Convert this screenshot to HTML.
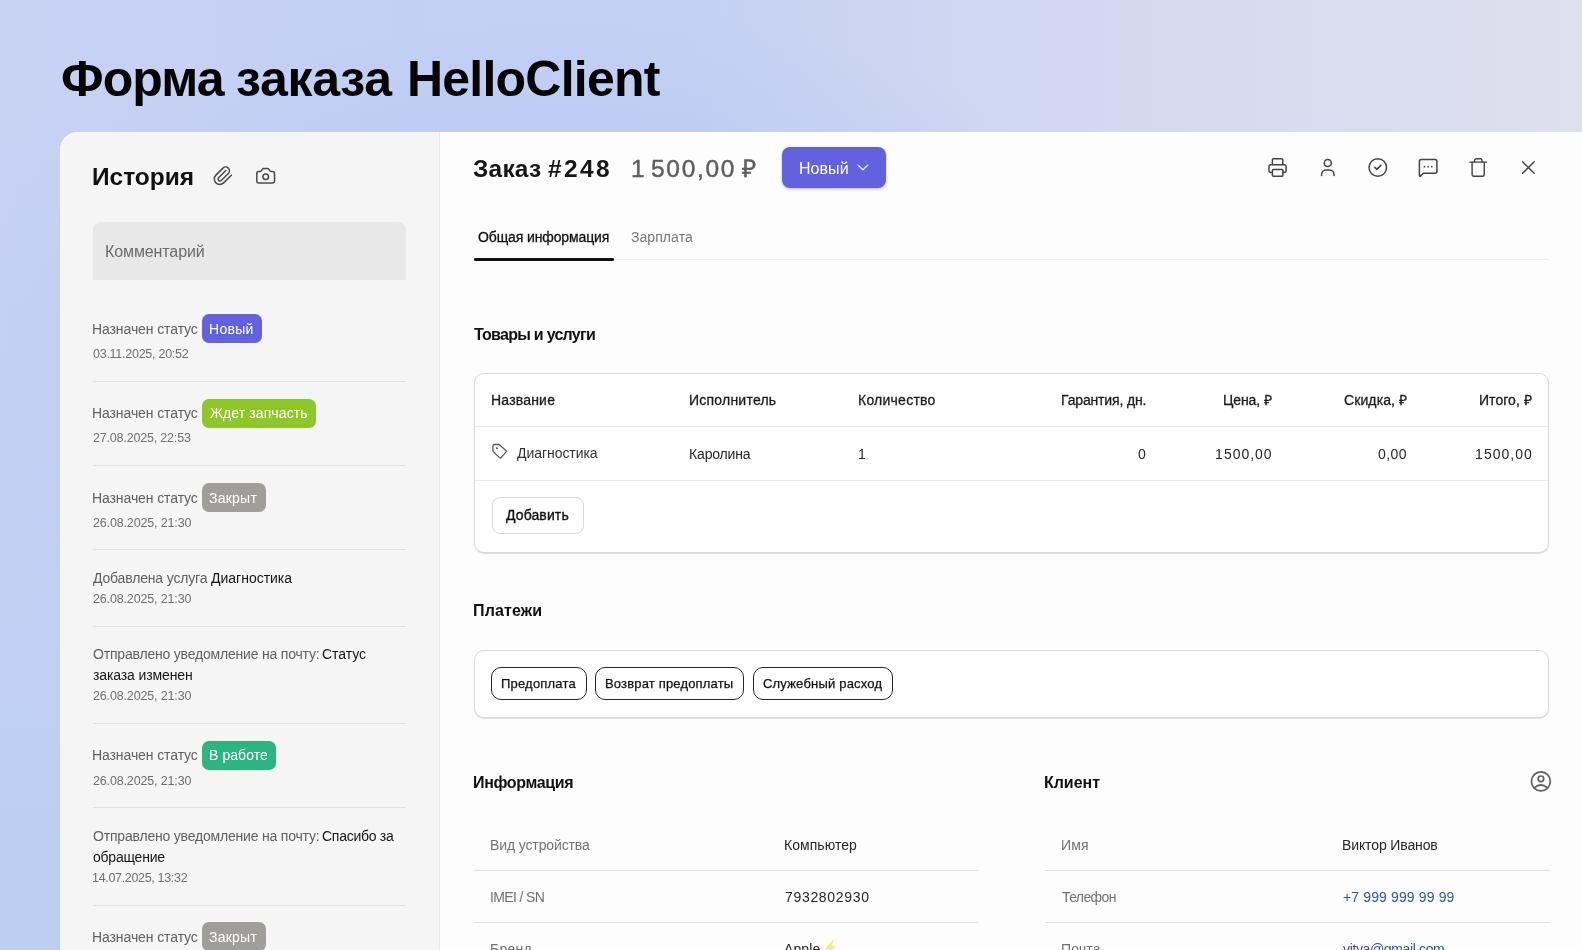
<!DOCTYPE html>
<html lang="ru">
<head>
<meta charset="utf-8">
<title>Форма заказа HelloClient</title>
<style>
*{box-sizing:border-box;margin:0;padding:0}
html,body{width:1582px;height:950px;overflow:hidden}
body{position:relative;font-family:"Liberation Sans",sans-serif;color:#111;background:#c6d0f3}
#bg{position:absolute;left:0;top:0;width:1582px;height:950px;background:linear-gradient(to bottom,rgba(189,206,243,0) 0px,rgba(189,206,243,0) 90px,rgba(189,206,243,1) 900px) 0 0/64px 950px no-repeat,radial-gradient(ellipse 620px 380px at 560px 380px,rgba(180,196,244,1) 0%,rgba(180,196,244,0) 100%),linear-gradient(to right,#c8d2f3 0px,#c4d0f3 400px,#c5d1f3 700px,#d0d7f1 1000px,#d9dcef 1300px,#dee0ee 1582px)}
.t{will-change:transform;position:absolute;white-space:pre;line-height:40px;height:40px}
.abs{position:absolute}
#card{position:absolute;left:60px;top:132px;width:1540px;height:840px;background:#fdfdfd;border-radius:18px 0 0 0}
#side{position:absolute;left:60px;top:132px;width:380px;height:840px;background:#f5f5f5;border-right:1px solid #e8e8e8;border-radius:18px 0 0 0}
.badge{position:absolute;height:29px;border-radius:7px}
.hr{position:absolute;height:1px;background:#e2e2e2}
.box{position:absolute;border:1px solid #dadada;border-radius:10px;background:#fff;box-shadow:0 1px 0 rgba(0,0,0,0.09),0 1px 3px rgba(0,0,0,0.04)}
.pill{position:absolute;height:32.5px;border:1.4px solid #262626;border-radius:10px}
svg{position:absolute;overflow:visible}
</style>
</head>
<body>
<div id="bg"></div>
<div id="card"></div>
<div id="side"></div>

<!-- sidebar -->
<div class="abs" style="left:93px;top:222px;width:313px;height:58px;background:#e8e8e8;border-radius:8px 8px 0 0"></div>
<div class="badge" style="left:201.5px;top:314px;width:60px;background:#6361de"></div>
<div class="hr" style="left:93px;top:381px;width:313px"></div>
<div class="badge" style="left:201.5px;top:399px;width:114.5px;background:#8cc828"></div>
<div class="hr" style="left:93px;top:465px;width:313px"></div>
<div class="badge" style="left:201.5px;top:483px;width:64.5px;background:#a09e9a"></div>
<div class="hr" style="left:93px;top:549px;width:313px"></div>
<div class="hr" style="left:93px;top:626px;width:313px"></div>
<div class="hr" style="left:93px;top:723px;width:313px"></div>
<div class="badge" style="left:201.5px;top:741px;width:74.5px;background:#2cb583"></div>
<div class="hr" style="left:93px;top:807px;width:313px"></div>
<div class="hr" style="left:93px;top:905px;width:313px"></div>
<div class="badge" style="left:201.5px;top:922px;width:64.5px;background:#a09e9a"></div>

<!-- header -->
<div class="abs" style="left:782px;top:147px;width:104px;height:41px;border-radius:8px;background:#6361de;box-shadow:0 1px 3px rgba(60,60,160,0.35)"></div>

<!-- tabs -->
<div class="hr" style="left:474px;top:259px;width:1075px;background:#ececec"></div>
<div class="abs" style="left:474px;top:258px;width:140px;height:2.6px;background:#111;border-radius:1.3px"></div>

<!-- products -->
<div class="box" style="left:474px;top:373px;width:1075px;height:180px"></div>
<div class="hr" style="left:475px;top:425.5px;width:1073px;background:#e9e9e9"></div>
<div class="hr" style="left:475px;top:479.5px;width:1073px;background:#e9e9e9"></div>
<div class="abs" style="left:492px;top:497px;width:92px;height:37px;border:1px solid #d9d9d9;border-radius:8px;background:#fff"></div>

<!-- payments -->
<div class="box" style="left:474px;top:650px;width:1075px;height:68px"></div>
<div class="pill" style="left:491px;top:667.2px;width:96px"></div>
<div class="pill" style="left:595px;top:667.2px;width:149px"></div>
<div class="pill" style="left:752.5px;top:667.2px;width:140px"></div>

<!-- info / client -->
<div class="hr" style="left:474px;top:870px;width:504px"></div>
<div class="hr" style="left:474px;top:922px;width:504px"></div>
<div class="hr" style="left:1045px;top:870px;width:505px"></div>
<div class="hr" style="left:1045px;top:922px;width:505px"></div>

<svg width="1582" height="950" viewBox="0 0 1582 950" style="left:0;top:0" fill="none" stroke-linecap="round" stroke-linejoin="round">
<!-- paperclip -->
<g transform="translate(205,160) rotate(-45)" stroke="#4a4a4a" stroke-width="1.5">
<path d="M7.87 29.32 L-3 29.32 A5.45 5.45 0 0 1 -3 18.42 L6.97 18.42 A3.79 3.79 0 0 1 6.97 26 L-3 26 A1.92 1.92 0 0 1 -3 22.17 L7.33 22.17"/>
</g>
<!-- camera -->
<g stroke="#4a4a4a" stroke-width="1.5">
<path d="M258.8 171.4 H260.2 Q261 171.4 261.5 170.6 L262.3 169.4 Q262.9 168.6 263.8 168.6 H267.5 Q268.4 168.6 269 169.4 L269.8 170.6 Q270.3 171.4 271.1 171.4 H272.5 A2 2 0 0 1 274.5 173.4 V181 A2 2 0 0 1 272.5 183 H258.8 A2 2 0 0 1 256.8 181 V173.4 A2 2 0 0 1 258.8 171.4 Z"/>
<circle cx="265.7" cy="176.7" r="2.8"/>
</g>
<!-- chevron in button -->
<path d="M858.2 165.2 L862.9 169.8 L867.7 165.2" stroke="#e6e6ff" stroke-width="1.3"/>
<!-- printer -->
<g stroke="#444" stroke-width="1.5">
<path d="M1272.4 164.6 V159.8 A1 1 0 0 1 1273.4 158.8 H1281.8 A1 1 0 0 1 1282.8 159.8 V164.6"/>
<path d="M1272.4 172.5 H1271 A2 2 0 0 1 1269 170.5 V166.7 A2 2 0 0 1 1271 164.7 H1284.1 A2 2 0 0 1 1286.1 166.7 V170.5 A2 2 0 0 1 1284.1 172.5 H1282.9"/>
<rect x="1272.4" y="169.4" width="10.5" height="6.8" rx="1"/>
</g>
<!-- person -->
<g stroke="#444" stroke-width="1.5">
<circle cx="1327.8" cy="163" r="3.5"/>
<path d="M1321.6 175.6 V174.4 A4.4 4.4 0 0 1 1326 170 H1329.7 A4.4 4.4 0 0 1 1334.1 174.4 V175.6"/>
</g>
<!-- check circle -->
<g stroke="#444" stroke-width="1.5">
<circle cx="1377.8" cy="167.5" r="8.75"/>
<path d="M1374.9 167.4 L1376.9 169.4 L1380.9 165.4" stroke-width="1.6"/>
</g>
<!-- chat -->
<g stroke="#444" stroke-width="1.5">
<path d="M1423.4 173.2 L1420.7 175.9 Q1419.4 176.9 1419.4 175.3 V161.6 A2 2 0 0 1 1421.4 159.6 H1434.9 A2 2 0 0 1 1436.9 161.6 V171.2 A2 2 0 0 1 1434.9 173.2 Z"/>
</g>
<g fill="#444"><circle cx="1424.5" cy="166.7" r="0.85"/><circle cx="1428.1" cy="166.7" r="0.85"/><circle cx="1431.8" cy="166.7" r="0.85"/></g>
<!-- trash -->
<g stroke="#444" stroke-width="1.4">
<path d="M1469.8 162.1 H1486.6"/>
<path d="M1474.6 162.1 V160.5 A1.7 1.7 0 0 1 1476.3 158.8 H1480.3 A1.7 1.7 0 0 1 1482 160.5 V162.1"/>
<path d="M1472.1 162.1 V174.3 A2 2 0 0 0 1474.1 176.3 H1482.25 A2 2 0 0 0 1484.25 174.3 V162.1"/>
</g>
<!-- close -->
<path d="M1522.6 161.8 L1534.2 173.3 M1534.2 161.8 L1522.6 173.3" stroke="#444" stroke-width="1.5"/>
<!-- tag -->
<g stroke="#5a5a5a" stroke-width="1.3">
<path d="M494.4 444.5 H498.6 Q499.2 444.5 499.7 445 L505.9 450.6 Q506.7 451.3 505.9 452.1 L501 457.6 Q500.3 458.4 499.5 457.6 L493.4 451.8 Q492.9 451.3 492.9 450.7 V446 A1.5 1.5 0 0 1 494.4 444.5 Z"/>
</g>
<circle cx="496.9" cy="448.3" r="0.95" fill="#5a5a5a"/>
<!-- person circle -->
<g stroke="#606060" stroke-width="1.7">
<circle cx="1540.9" cy="781.4" r="9.45"/>
<circle cx="1540.9" cy="778.8" r="2.8"/>
<path d="M1534.6 787.6 Q1540.9 782.4 1547.2 787.6"/>
</g>
<!-- lightning -->
<path d="M832.9 940.6 L825.6 948.6 L829.4 948.6 L826.8 955 L834.8 946.6 L831.2 946.6 Z" fill="#fbe98f" stroke="#f2d35c" stroke-width="0.5"/>
</svg>

<span class="t" id="t1" style="left:61.10px;top:59px;font-size:50px;color:#050505;font-weight:bold;letter-spacing:-0.945px">Форма</span>
<span class="t" id="t2" style="left:235.93px;top:59px;font-size:50px;color:#050505;font-weight:bold;letter-spacing:-0.288px">заказа</span>
<span class="t" id="t3" style="left:407.30px;top:59px;font-size:50px;color:#050505;font-weight:bold;letter-spacing:-0.774px">HelloClient</span>
<span class="t" id="hist" style="left:91.93px;top:157px;font-size:24.5px;color:#111;font-weight:bold;letter-spacing:-0.030px">История</span>
<span class="t" id="comm" style="left:105.02px;top:232px;font-size:16px;color:#6b6b6b;letter-spacing:-0.108px">Комментарий</span>
<span class="t" id="r1s" style="left:92.49px;top:309px;font-size:14px;color:#5f5f5f;letter-spacing:-0.096px">Назначен статус</span>
<span class="t" id="r1b" style="left:209.10px;top:309px;font-size:14px;color:#ffffff;letter-spacing:0.270px">Новый</span>
<span class="t" id="r1d" style="left:93.39px;top:334px;font-size:12.5px;color:#6e6e6e;letter-spacing:-0.260px">03.11.2025, 20:52</span>
<span class="t" id="r2s" style="left:92.49px;top:393px;font-size:14px;color:#5f5f5f;letter-spacing:-0.096px">Назначен статус</span>
<span class="t" id="r2b" style="left:210.00px;top:393px;font-size:14px;color:#ffffff;letter-spacing:0.105px">Ждет запчасть</span>
<span class="t" id="r2d" style="left:93.39px;top:418px;font-size:12.5px;color:#6e6e6e;letter-spacing:-0.182px">27.08.2025, 22:53</span>
<span class="t" id="r3s" style="left:92.49px;top:478px;font-size:14px;color:#5f5f5f;letter-spacing:-0.096px">Назначен статус</span>
<span class="t" id="r3b" style="left:209.10px;top:478px;font-size:14px;color:#ffffff;letter-spacing:0.234px">Закрыт</span>
<span class="t" id="r3d" style="left:93.39px;top:503px;font-size:12.5px;color:#6e6e6e;letter-spacing:-0.150px">26.08.2025, 21:30</span>
<span class="t" id="r4a" style="left:93.39px;top:558px;font-size:14px;color:#5f5f5f;letter-spacing:-0.168px">Добавлена услуга</span>
<span class="t" id="r4b" style="left:211.05px;top:558px;font-size:14px;color:#151515;letter-spacing:-0.009px">Диагностика</span>
<span class="t" id="r4d" style="left:93.39px;top:579px;font-size:12.5px;color:#6e6e6e;letter-spacing:-0.150px">26.08.2025, 21:30</span>
<span class="t" id="r5a" style="left:93.39px;top:634px;font-size:14px;color:#5f5f5f;letter-spacing:-0.195px">Отправлено уведомление на почту:</span>
<span class="t" id="r5b" style="left:322.22px;top:634px;font-size:14px;color:#151515;letter-spacing:-0.036px">Статус</span>
<span class="t" id="r5c" style="left:93.39px;top:655px;font-size:14px;color:#151515;letter-spacing:-0.118px">заказа изменен</span>
<span class="t" id="r5d" style="left:93.39px;top:676px;font-size:12.5px;color:#6e6e6e;letter-spacing:-0.150px">26.08.2025, 21:30</span>
<span class="t" id="r6s" style="left:92.49px;top:735px;font-size:14px;color:#5f5f5f;letter-spacing:-0.096px">Назначен статус</span>
<span class="t" id="r6b" style="left:209.10px;top:735px;font-size:14px;color:#ffffff;letter-spacing:0.076px">В работе</span>
<span class="t" id="r6d" style="left:93.39px;top:761px;font-size:12.5px;color:#6e6e6e;letter-spacing:-0.150px">26.08.2025, 21:30</span>
<span class="t" id="r7a" style="left:93.39px;top:816px;font-size:14px;color:#5f5f5f;letter-spacing:-0.195px">Отправлено уведомление на почту:</span>
<span class="t" id="r7b" style="left:322.22px;top:816px;font-size:14px;color:#151515;letter-spacing:-0.269px">Спасибо за</span>
<span class="t" id="r7c" style="left:93.39px;top:837px;font-size:14px;color:#151515;letter-spacing:-0.224px">обращение</span>
<span class="t" id="r7d" style="left:92.49px;top:858px;font-size:12.5px;color:#6e6e6e;letter-spacing:-0.324px">14.07.2025, 13:32</span>
<span class="t" id="r8s" style="left:92.49px;top:917px;font-size:14px;color:#5f5f5f;letter-spacing:-0.096px">Назначен статус</span>
<span class="t" id="r8b" style="left:209.10px;top:917px;font-size:14px;color:#ffffff;letter-spacing:0.234px">Закрыт</span>
<span class="t" id="o1" style="left:473.15px;top:149px;font-size:24.5px;color:#161616;font-weight:bold;letter-spacing:0.206px">Заказ</span>
<span class="t" id="o2" style="left:547.78px;top:149px;font-size:24.5px;color:#161616;font-weight:bold;letter-spacing:2.370px">#248</span>
<span class="t" id="p1" style="left:631.06px;top:149px;font-size:24.5px;color:#5e5e5e;-webkit-text-stroke:0.45px #5e5e5e">1</span>
<span class="t" id="p2" style="left:651.15px;top:149px;font-size:24.5px;color:#5e5e5e;letter-spacing:1.710px;-webkit-text-stroke:0.45px #5e5e5e">500,00</span>
<span class="t" id="p3" style="left:742.39px;top:149px;font-size:24.5px;color:#5e5e5e;-webkit-text-stroke:0.45px #5e5e5e">₽</span>
<span class="t" id="btn" style="left:799.27px;top:149px;font-size:16px;color:#ffffff;letter-spacing:0.045px">Новый</span>
<span class="t" id="tab1" style="left:478.22px;top:217px;font-size:14px;color:#111;letter-spacing:-0.120px;-webkit-text-stroke:0.3px #111">Общая информация</span>
<span class="t" id="tab2" style="left:630.62px;top:217px;font-size:14px;color:#777;letter-spacing:0.065px">Зарплата</span>
<span class="t" id="h1" style="left:474.39px;top:315px;font-size:16px;color:#111;font-weight:bold;letter-spacing:-0.728px">Товары и услуги</span>
<span class="t" id="th1" style="left:490.71px;top:380px;font-size:14px;color:#1c1c1c;letter-spacing:0.193px;-webkit-text-stroke:0.3px #1c1c1c">Название</span>
<span class="t" id="th2" style="left:689.15px;top:380px;font-size:14px;color:#1c1c1c;letter-spacing:0.225px;-webkit-text-stroke:0.3px #1c1c1c">Исполнитель</span>
<span class="t" id="th3" style="left:858.49px;top:380px;font-size:14px;color:#1c1c1c;letter-spacing:0.240px;-webkit-text-stroke:0.3px #1c1c1c">Количество</span>
<span class="t" id="th4" style="left:1061.15px;top:380px;font-size:14px;color:#1c1c1c;letter-spacing:-0.154px;-webkit-text-stroke:0.3px #1c1c1c">Гарантия, дн.</span>
<span class="t" id="th5" style="left:1222.88px;top:380px;font-size:14px;color:#1c1c1c;letter-spacing:-0.120px;-webkit-text-stroke:0.3px #1c1c1c">Цена, ₽</span>
<span class="t" id="th6" style="left:1343.92px;top:380px;font-size:14px;color:#1c1c1c;letter-spacing:0.101px;-webkit-text-stroke:0.3px #1c1c1c">Скидка, ₽</span>
<span class="t" id="th7" style="left:1478.88px;top:380px;font-size:14px;color:#1c1c1c;letter-spacing:0.038px;-webkit-text-stroke:0.3px #1c1c1c">Итого, ₽</span>
<span class="t" id="td1" style="left:517.00px;top:433px;font-size:14px;color:#333;letter-spacing:-0.054px">Диагностика</span>
<span class="t" id="td2" style="left:689.15px;top:434px;font-size:14px;color:#262626;letter-spacing:-0.155px">Каролина</span>
<span class="t" id="td3" style="left:858.49px;top:434px;font-size:14px;color:#262626">1</span>
<span class="t" id="td4" style="left:1137.92px;top:434px;font-size:14px;color:#262626">0</span>
<span class="t" id="td5a" style="left:1214.88px;top:434px;font-size:14px;color:#262626">1</span>
<span class="t" id="td5b" style="left:1224.49px;top:434px;font-size:14px;color:#262626;letter-spacing:0.954px">500,00</span>
<span class="t" id="td6" style="left:1378.22px;top:434px;font-size:14px;color:#262626;letter-spacing:0.450px">0,00</span>
<span class="t" id="td7a" style="left:1474.88px;top:434px;font-size:14px;color:#262626">1</span>
<span class="t" id="td7b" style="left:1484.49px;top:434px;font-size:14px;color:#262626;letter-spacing:0.972px">500,00</span>
<span class="t" id="add" style="left:506.00px;top:495px;font-size:14px;color:#111;letter-spacing:0.114px;-webkit-text-stroke:0.35px #111">Добавить</span>
<span class="t" id="h2" style="left:473.10px;top:591px;font-size:16px;color:#111;font-weight:bold;letter-spacing:0.135px">Платежи</span>
<span class="t" id="pl1" style="left:500.93px;top:664px;font-size:13px;color:#111;letter-spacing:0.200px;-webkit-text-stroke:0.25px #111">Предоплата</span>
<span class="t" id="pl2" style="left:605.15px;top:664px;font-size:13px;color:#111;letter-spacing:0.171px;-webkit-text-stroke:0.25px #111">Возврат предоплаты</span>
<span class="t" id="pl3" style="left:763.00px;top:664px;font-size:13px;color:#111;letter-spacing:0.198px;-webkit-text-stroke:0.25px #111">Служебный расход</span>
<span class="t" id="h3" style="left:472.54px;top:763px;font-size:16px;color:#111;font-weight:bold;letter-spacing:-0.370px">Информация</span>
<span class="t" id="h4" style="left:1044.32px;top:763px;font-size:16px;color:#111;font-weight:bold;letter-spacing:-0.036px">Клиент</span>
<span class="t" id="i1l" style="left:489.71px;top:825px;font-size:14px;color:#737373;letter-spacing:-0.118px">Вид устройства</span>
<span class="t" id="i1v" style="left:783.54px;top:825px;font-size:14px;color:#262626;letter-spacing:0.048px">Компьютер</span>
<span class="t" id="i2l" style="left:489.71px;top:877px;font-size:14px;color:#737373;letter-spacing:-0.618px">IMEI / SN</span>
<span class="t" id="i2v" style="left:785.08px;top:877px;font-size:14px;color:#262626;letter-spacing:0.680px">7932802930</span>
<span class="t" id="i3l" style="left:489.71px;top:929px;font-size:14px;color:#737373;letter-spacing:0.270px">Бренд</span>
<span class="t" id="i3v" style="left:783.54px;top:929px;font-size:14px;color:#262626;letter-spacing:0.112px">Apple</span>
<span class="t" id="c1l" style="left:1061.32px;top:825px;font-size:14px;color:#737373;letter-spacing:0.180px">Имя</span>
<span class="t" id="c1v" style="left:1342.49px;top:825px;font-size:14px;color:#262626;letter-spacing:-0.120px">Виктор Иванов</span>
<span class="t" id="c2l" style="left:1062.22px;top:877px;font-size:14px;color:#737373;letter-spacing:-0.615px">Телефон</span>
<span class="t" id="c2v" style="left:1343.39px;top:877px;font-size:14px;color:#2a56a4;letter-spacing:0.132px">+7 999 999 99 99</span>
<span class="t" id="c3l" style="left:1061.32px;top:929px;font-size:14px;color:#737373;letter-spacing:0.180px">Почта</span>
<span class="t" id="c3v" style="left:1343.39px;top:929px;font-size:14px;color:#2a56a4;letter-spacing:-0.359px">vitya@gmail.com</span>
</body>
</html>
